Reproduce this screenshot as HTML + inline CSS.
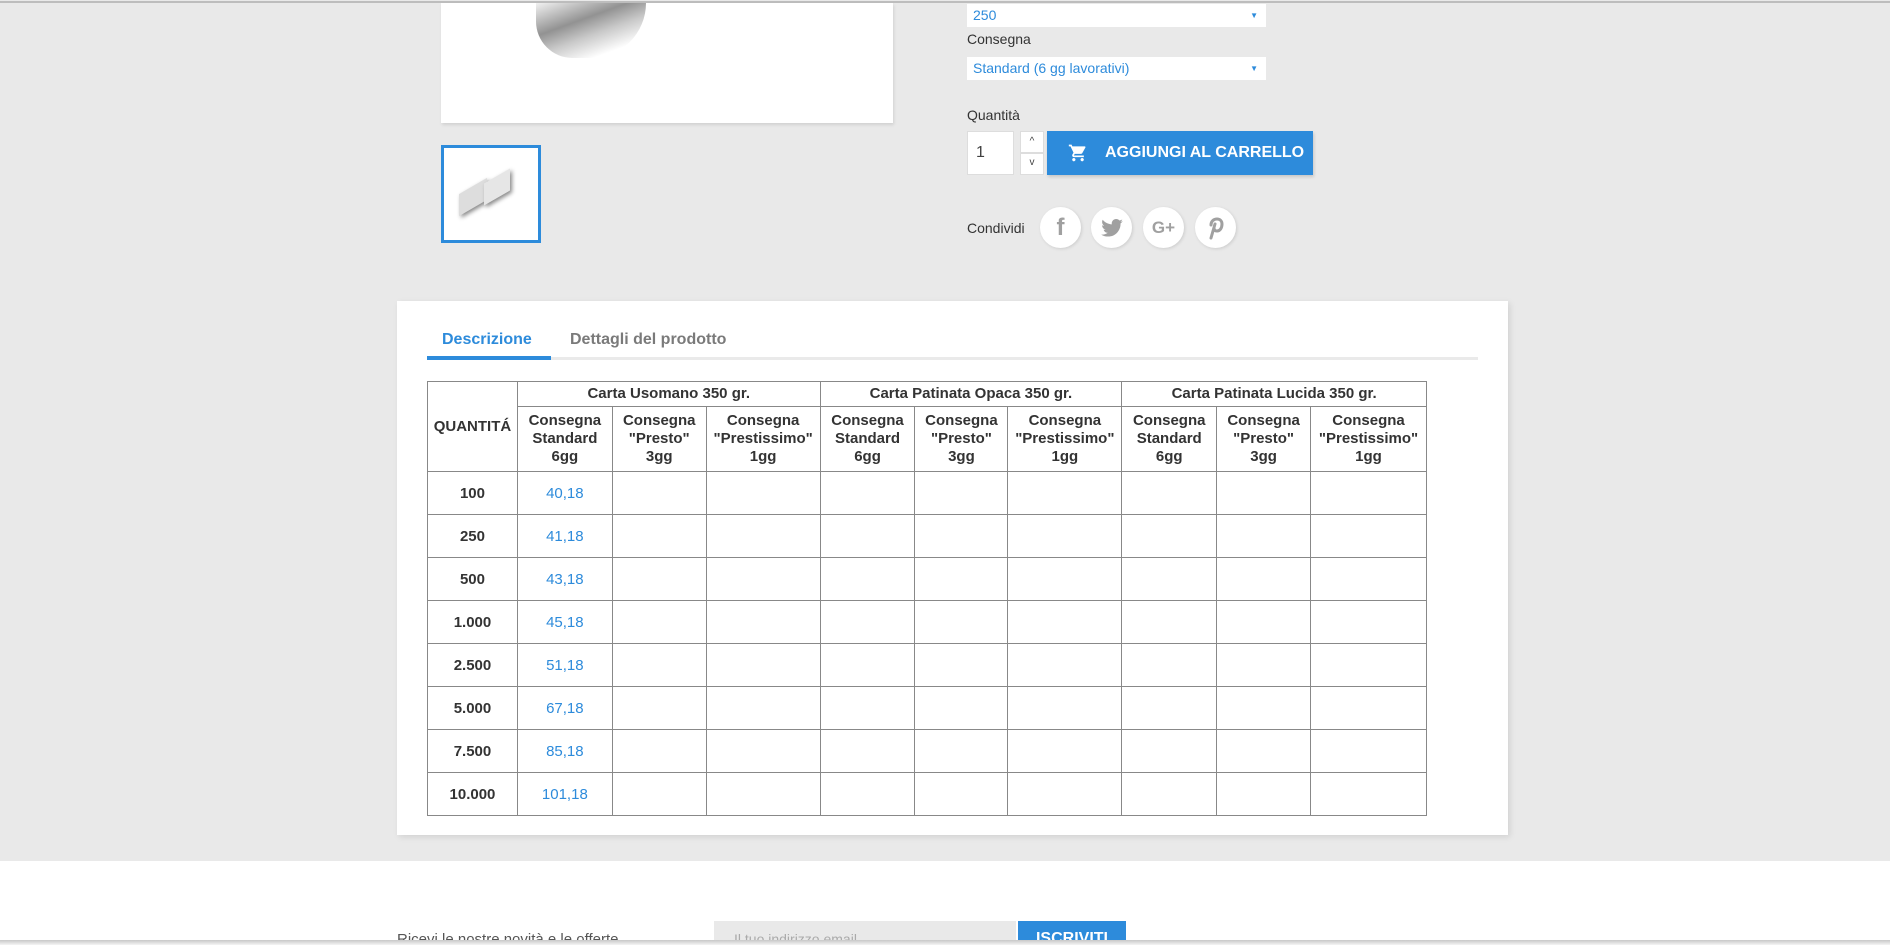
<!DOCTYPE html>
<html><head><meta charset="utf-8"><style>
*{box-sizing:border-box;margin:0;padding:0}
html,body{width:1890px;height:945px;overflow:hidden}
body{background:#fff;font-family:"Liberation Sans",sans-serif;color:#414141;position:relative}
.bg{position:absolute;left:0;top:0;width:1890px;height:861px;background:#e9e9e9}
.topline{position:absolute;left:0;top:1px;width:1890px;height:2px;background:#bdbdbd}
.a{position:absolute}
.sel{background:#fff;color:#2d8bdb;font-size:14px;padding-left:6px;line-height:23px}
.sel:after{content:"▼";position:absolute;right:8px;top:0;font-size:8px;color:#2d8bdb}
.lbl{font-size:14px;color:#333}
.circ{width:41px;height:41px;border-radius:50%;background:#fff;box-shadow:1px 1px 3px rgba(0,0,0,.12);display:flex;align-items:center;justify-content:center;color:#a0a0a0;font-weight:bold}
table{border-collapse:collapse;position:absolute;left:427px;top:381px;width:1000px;border:1.5px solid #222}
td,th{border:1px solid #888;text-align:center;font-size:15px;color:#333}
th{font-weight:bold;line-height:18px}
td{height:43px}
td.q{font-weight:bold}
td.p{color:#2d8bdb}
</style></head><body>
<div class="bg"></div>
<div class="topline"></div>
<div class="a" style="left:441px;top:3px;width:452px;height:120px;background:#fff;box-shadow:1px 2px 3px rgba(0,0,0,.1)">
<div class="a" style="left:95px;top:0;width:110px;height:55px;background:linear-gradient(160deg,#eee 0%,#777 35%,#bbb 55%,#fff 80%);border-radius:0 0 60px 40px;opacity:.8"></div></div>
<div class="a" style="left:441px;top:145px;width:100px;height:98px;background:#fff;border:3px solid #2d8bdb">
<div class="a" style="left:15px;top:38px;width:28px;height:22px;background:#ddd;transform:skewY(-30deg);box-shadow:2px 3px 4px #888"></div>
<div class="a" style="left:40px;top:28px;width:26px;height:22px;background:#e6e6e6;transform:skewY(-30deg);box-shadow:2px 3px 4px #888"></div>
</div>
<div class="a sel" style="left:967px;top:4px;width:299px;height:23px">250</div>
<div class="a lbl" style="left:967px;top:31px">Consegna</div>
<div class="a sel" style="left:967px;top:57px;width:299px;height:23px">Standard (6 gg lavorativi)</div>
<div class="a lbl" style="left:967px;top:107px">Quantità</div>
<div class="a" style="left:967px;top:131px;width:47px;height:44px;background:#fff;border:1px solid #ddd;font-size:16px;line-height:42px;padding-left:8px">1</div>
<div class="a" style="left:1020px;top:131px;width:24px;height:22px;background:#fff;border:1px solid #ddd;font-size:10px;text-align:center;line-height:20px">^</div>
<div class="a" style="left:1020px;top:153px;width:24px;height:22px;background:#fff;border:1px solid #ddd;font-size:10px;text-align:center;line-height:18px">v</div>
<div class="a" style="left:1047px;top:131px;width:266px;height:44px;background:#2d8bdb;color:#fff;font-weight:bold;font-size:16px;line-height:44px;padding-left:58px;box-shadow:1px 2px 3px rgba(0,0,0,.15)">AGGIUNGI AL CARRELLO
<svg class="a" style="left:20px;top:12px" width="22" height="20" viewBox="0 0 24 24"><path fill="#fff" d="M7 18c-1.1 0-2 .9-2 2s.9 2 2 2 2-.9 2-2-.9-2-2-2zM1 2v2h2l3.6 7.6-1.4 2.4c-.1.3-.2.6-.2 1 0 1.1.9 2 2 2h12v-2H7.4c-.1 0-.2-.1-.2-.2v-.1l.9-1.7h7.4c.8 0 1.4-.4 1.7-1l3.6-6.5c.1-.2.2-.3.2-.5 0-.6-.4-1-1-1H5.2l-.9-2H1zm16 16c-1.1 0-2 .9-2 2s.9 2 2 2 2-.9 2-2-.9-2-2-2z"/></svg></div>
<div class="a lbl" style="left:967px;top:220px">Condividi</div>
<div class="a circ" style="left:1040px;top:207px;font-size:24px;font-family:'Liberation Sans'">f</div>
<div class="a circ" style="left:1091px;top:207px"><svg width="22" height="18" viewBox="0 0 24 20"><path fill="#a0a0a0" d="M24 2.4c-.9.4-1.8.7-2.8.8 1-.6 1.8-1.6 2.2-2.7-1 .6-2 1-3.1 1.2C19.4.7 18.1 0 16.6 0c-2.7 0-4.9 2.2-4.9 4.9 0 .4 0 .8.1 1.1C7.7 5.8 4.1 3.9 1.7.9c-.4.7-.7 1.6-.7 2.5 0 1.7.9 3.2 2.2 4.1-.8 0-1.6-.2-2.2-.6v.1c0 2.4 1.7 4.4 3.9 4.8-.4.1-.8.2-1.3.2-.3 0-.6 0-.9-.1.6 2 2.4 3.4 4.6 3.4-1.7 1.3-3.8 2.1-6.1 2.1-.4 0-.8 0-1.2-.1 2.2 1.4 4.8 2.2 7.5 2.2 9.1 0 14-7.5 14-14v-.6c1-.7 1.8-1.6 2.5-2.5z"/></svg></div>
<div class="a circ" style="left:1143px;top:207px;font-size:17px">G+</div>
<div class="a circ" style="left:1195px;top:207px"><svg width="18" height="24" viewBox="0 0 18 24"><path fill="none" stroke="#a0a0a0" stroke-width="3" stroke-linecap="round" d="M4 9c0-4 3-6 6-6s5 2 5 5c0 4-2 7-5 7-2 0-3-1-3-3M8 8L4 22"/></svg></div>
<div class="a" style="left:397px;top:301px;width:1111px;height:534px;background:#fff;box-shadow:2px 2px 6px rgba(0,0,0,.1)"></div>
<div class="a" style="left:427px;top:357px;width:1051px;height:3px;background:#eaeaea"></div>
<div class="a" style="left:427px;top:356px;width:124px;height:4px;background:#2d8bdb"></div>
<div class="a" style="left:442px;top:331px;font-size:16px;font-weight:bold;color:#2d8bdb">Descrizione</div>
<div class="a" style="left:570px;top:331px;font-size:16px;font-weight:bold;color:#7a7a7a">Dettagli del prodotto</div>
<table>
<colgroup><col style="width:90px"><col style="width:95px"><col style="width:94px"><col style="width:114px"><col style="width:95px"><col style="width:93px"><col style="width:114px"><col style="width:95px"><col style="width:94px"><col style="width:116px"></colgroup>
<tr style="height:25px"><th rowspan="2">QUANTITÁ</th><th colspan="3">Carta Usomano 350 gr.</th><th colspan="3">Carta Patinata Opaca 350 gr.</th><th colspan="3">Carta Patinata Lucida 350 gr.</th></tr>
<tr style="height:65px"><th>Consegna<br>Standard<br>6gg</th><th>Consegna<br>"Presto"<br>3gg</th><th>Consegna<br>"Prestissimo"<br>1gg</th><th>Consegna<br>Standard<br>6gg</th><th>Consegna<br>"Presto"<br>3gg</th><th>Consegna<br>"Prestissimo"<br>1gg</th><th>Consegna<br>Standard<br>6gg</th><th>Consegna<br>"Presto"<br>3gg</th><th>Consegna<br>"Prestissimo"<br>1gg</th></tr>
<tr><td class="q">100</td><td class="p">40,18</td><td></td><td></td><td></td><td></td><td></td><td></td><td></td><td></td></tr>
<tr><td class="q">250</td><td class="p">41,18</td><td></td><td></td><td></td><td></td><td></td><td></td><td></td><td></td></tr>
<tr><td class="q">500</td><td class="p">43,18</td><td></td><td></td><td></td><td></td><td></td><td></td><td></td><td></td></tr>
<tr><td class="q">1.000</td><td class="p">45,18</td><td></td><td></td><td></td><td></td><td></td><td></td><td></td><td></td></tr>
<tr><td class="q">2.500</td><td class="p">51,18</td><td></td><td></td><td></td><td></td><td></td><td></td><td></td><td></td></tr>
<tr><td class="q">5.000</td><td class="p">67,18</td><td></td><td></td><td></td><td></td><td></td><td></td><td></td><td></td></tr>
<tr><td class="q">7.500</td><td class="p">85,18</td><td></td><td></td><td></td><td></td><td></td><td></td><td></td><td></td></tr>
<tr><td class="q">10.000</td><td class="p">101,18</td><td></td><td></td><td></td><td></td><td></td><td></td><td></td><td></td></tr>
</table>
<div class="a" style="left:397px;top:931px;font-size:15px;color:#555">Ricevi le nostre novità e le offerte</div>
<div class="a" style="left:714px;top:921px;width:302px;height:24px;background:#e9e9e9;font-size:14px;color:#aaa;padding:10px 0 0 20px;overflow:hidden">Il tuo indirizzo email</div>
<div class="a" style="left:1018px;top:921px;width:108px;height:24px;background:#2d8bdb;color:#fff;font-weight:bold;font-size:16px;text-align:center;padding-top:9px;overflow:hidden">ISCRIVITI</div>
<div class="a" style="left:0;top:940px;width:1890px;height:5px;background:linear-gradient(#c8c8c8,#f4f4f4);z-index:5"></div>
</body></html>
